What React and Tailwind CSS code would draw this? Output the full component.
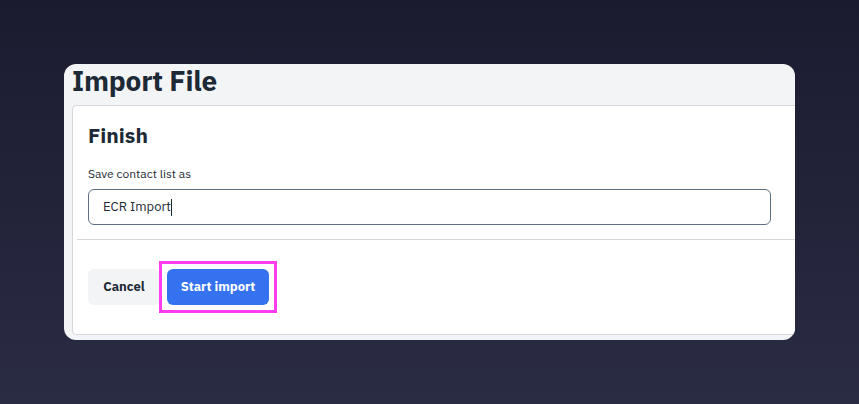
// Import File – finish step
export default function App() {
  return (
    <div
      className="w-[859px] h-[404px] overflow-hidden bg-gradient-to-b from-[#1b1b30] to-[#2a2c44] flex items-start pt-[64px] pl-[64px]"
      style={{ fontFamily: '"IBM Plex Sans", "Noto Sans", Inter, sans-serif' }}
    >
      <div className="w-[731px] h-[276px] rounded-[12px] bg-[#f3f4f6] overflow-hidden flex flex-col">
        <h1 className="pl-[8px] text-[28px] leading-[33px] font-bold text-[#1d2a36] tracking-[-0.2px]">
          Import File
        </h1>

        <div className="ml-[8px] mt-[8px] flex-1 mb-[5px] bg-white border border-r-0 border-[#d3d6db] rounded-l-[5px] flex flex-col">
          <div className="px-[15px] pt-[16px] pb-[14px]">
            <h2 className="text-[21px] leading-[26px] font-bold text-[#1d2a36]">Finish</h2>
            <label className="block mt-[18px] text-[12px] leading-[16px] text-[#1d2a36]">
              Save contact list as
            </label>
            <div className="mt-[7px] w-[683px] h-[36px] rounded-[6px] border border-[#5f6f82] flex items-center pl-[14px] text-[13px] text-[#1d2a36]">
              ECR Import
              <span className="inline-block w-px h-[17px] bg-[#1d2a36]" />
            </div>
          </div>

          <div className="ml-[4px] border-t border-[#d3d6db]" />

          <div className="flex items-center pl-[15px] pt-[21px]">
            <button className="w-[72px] h-[36px] rounded-[6px] bg-[#f3f4f6] text-[13px] font-bold text-[#1d2a36]">
              Cancel
            </button>
            <div className="ml-[-1px] border-[3px] border-[#ff3cf0] bg-white px-[5px] py-[5px]">
              <button className="w-[102px] h-[36px] rounded-[6px] bg-[#3472f0] text-[13px] font-bold text-white">
                Start import
              </button>
            </div>
          </div>
        </div>
      </div>
    </div>
  )
}
